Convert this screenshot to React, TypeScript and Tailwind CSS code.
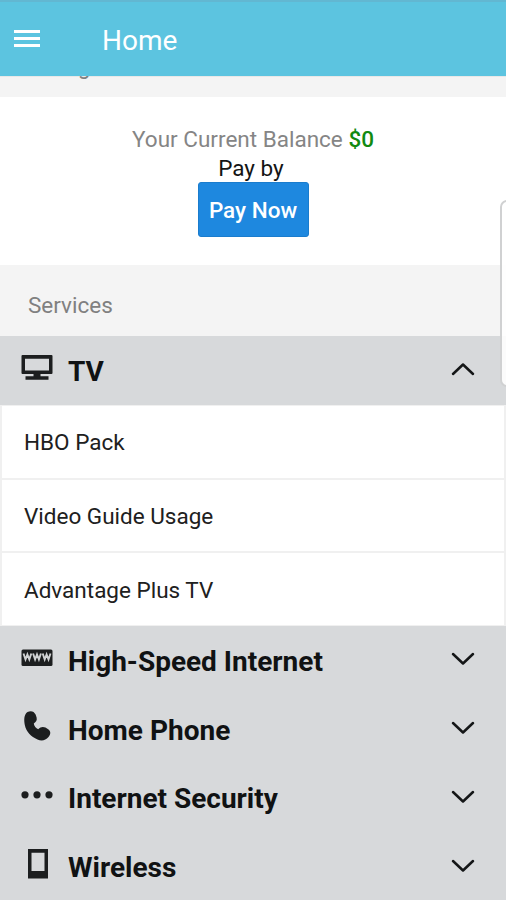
import type { ReactNode } from "react";

type IconName = "tv" | "www" | "phone" | "dots" | "mobile";

interface Service {
	name: string;
	icon: IconName;
	items?: string[];
}

const services: Service[] = [
	{
		name: "TV",
		icon: "tv",
		items: ["HBO Pack", "Video Guide Usage", "Advantage Plus TV"],
	},
	{ name: "High-Speed Internet", icon: "www" },
	{ name: "Home Phone", icon: "phone" },
	{ name: "Internet Security", icon: "dots" },
	{ name: "Wireless", icon: "mobile" },
];

const icons: Record<IconName, ReactNode> = {
	tv: (
		<>
			<path
				fillRule="evenodd"
				d="M1.5 4h29q1 0 1 1v17q0 1-1 1h-29q-1 0-1-1V5q0-1 1-1zM4 7.700v11.800h24V7.700z"
			/>
			<path d="M12.500 22.500h7v2.800h8V28.800h-23v-3.500h8z" />
		</>
	),
	www: (
		<>
			<rect x="0.5" y="8.500" width="31" height="16.500" rx="1.5" />
			<path
				d="M2.500 12.500l2 6 1.900-5 1.900 5 2-6M12.100 12.500l2 6 1.900-5 1.900 5 2-6M21.700 12.500l2 6 1.900-5 1.900 5 2-6"
				fill="none"
				stroke="#d0d2d3"
				strokeWidth="1.9"
			/>
		</>
	),
	phone: (
		<path d="M6.500 2C10 .3 13 1.300 14.600 4.500L15.600 7.500C16.300 10.500 15 12 12.800 13.500C13 16 15 18.400 17.200 19.200C19.500 16.800 22 16.400 24.500 17.600L27.500 19.500C30 21.500 29.800 24.500 27.500 27C24.500 30.600 20.500 31.200 16.500 29.500C10 26.800 5.200 21.500 3.800 15C2.900 10 2.800 4.500 6.500 2z" />
	),
	dots: (
		<>
			<circle cx="4" cy="15.800" r="3.600" />
			<circle cx="16" cy="15.800" r="3.600" />
			<circle cx="28" cy="15.800" r="3.600" />
		</>
	),
	mobile: (
		<path
			fillRule="evenodd"
			d="M7 1h20v29.500H7zM10.500 4.800v18.200h13V4.800z"
		/>
	),
};

function ServiceHeader({ name, icon, open }: Service & { open: boolean }) {
	return (
		<div className="flex h-[68.75px] items-center bg-[#d7d9db] pr-[31px] pl-[21px] text-[#141617]">
			<svg
				viewBox="0 0 32 32"
				className="mb-[6px] size-8 shrink-0 text-[#1c1e1f]"
				fill="currentColor"
			>
				{icons[icon]}
			</svg>
			<span className="ml-[15px] flex-1 pt-[3px] font-bold text-[#101213] text-[28px] leading-8">
				{name}
			</span>
			<svg
				viewBox="0 0 24 14"
				className="mb-[2px] h-[14px] w-6"
				fill="none"
				stroke="currentColor"
				strokeWidth="2.500"
				strokeLinecap="round"
				strokeLinejoin="round"
			>
				<path d={open ? "M2 12L12 2.500L22 12" : "M2 2L12 11.500L22 2"} />
			</svg>
		</div>
	);
}

export default function App() {
	return (
		<div className="relative h-[900px] w-[506px] overflow-hidden bg-[#f4f4f4] font-['Roboto',sans-serif]">
			<header className="relative z-10 flex h-[76px] items-center border-[#62b7d2] border-t-2 bg-[#5cc4e0] pl-[14px] text-white">
				<div className="-mt-[2px] flex w-[26px] flex-col gap-[4px]">
					<div className="h-[3px] bg-white" />
					<div className="h-[3px] bg-white" />
					<div className="h-[3px] bg-white" />
				</div>
				<h1 className="ml-[62px] pt-[3px] text-[28px] leading-8">Home</h1>
			</header>

			{/* previous section heading, scrolled under the header */}
			<div className="h-[21px] border-[#e8e8e8] border-t pl-[78px] text-[#808080]">
				<div className="-mt-[22px] text-[22px] leading-6">g</div>
			</div>

			<section className="flex h-[168px] flex-col items-center bg-white pt-[28px] text-[#141414] text-[22.500px] leading-[29px]">
				<p className="text-[#858585]">
					Your Current Balance{" "}
					<span className="font-medium text-[#118a11]">$0</span>
				</p>
				<p className="-ml-1">Pay by</p>
				<button
					type="button"
					className="-mt-px h-[55px] w-[111px] rounded-[3px] border border-[#1a7ccd] bg-[#1e88df] pt-[2px] font-medium text-white"
				>
					Pay Now
				</button>
			</section>

			<h2 className="flex h-[71px] items-center pt-[11px] pl-[28px] text-[#808080] text-[22.500px]">
				Services
			</h2>

			{services.map((service) => (
				<div key={service.name}>
					<ServiceHeader {...service} open={!!service.items} />
					{service.items?.map((item) => (
						<div
							key={item}
							className="flex h-[73.750px] items-center border-[#f0f0f0] border-x-2 border-y bg-white pt-[3px] pl-[22px] text-[#202020] text-[22.500px]"
						>
							{item}
						</div>
					))}
				</div>
			))}

			{/* edge panel handle */}
			<div className="absolute top-[200px] left-[500px] h-[187px] w-4 rounded-[7px] border-2 border-[#d0d1d2] bg-white/90" />
		</div>
	);
}
